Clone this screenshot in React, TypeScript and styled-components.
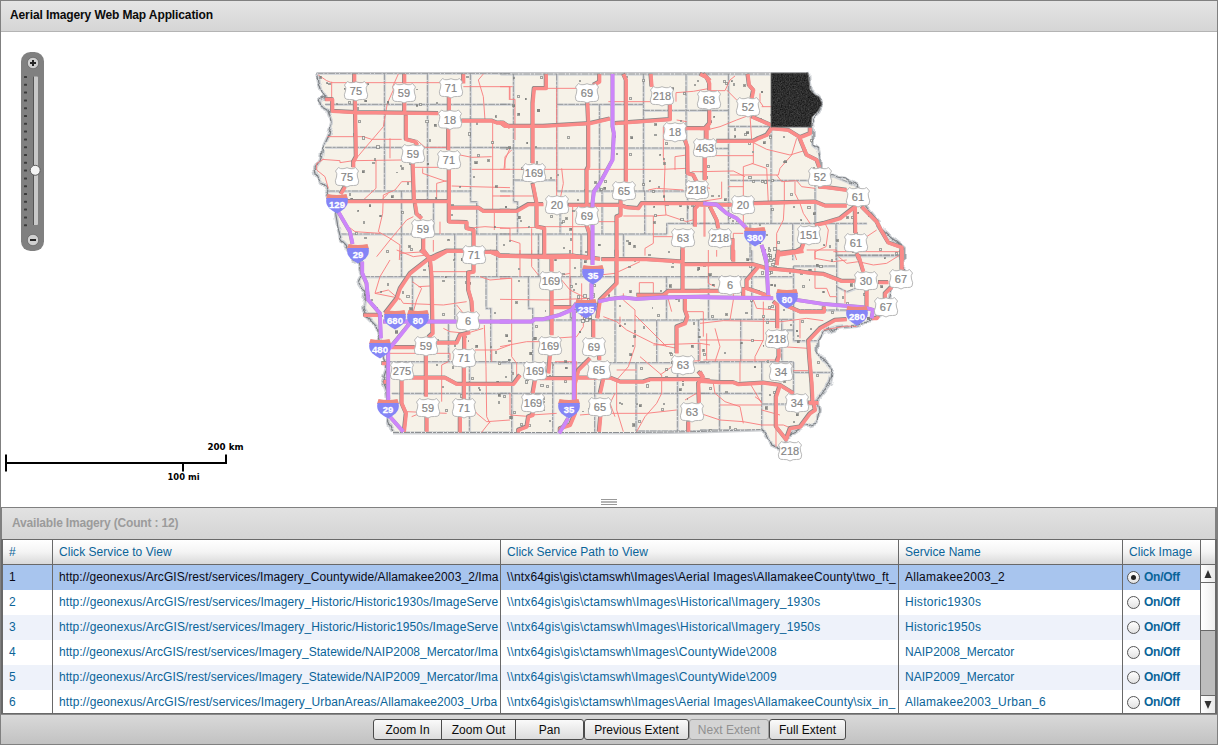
import React, { useState } from "react";
import styled, { createGlobalStyle } from "styled-components";

const GlobalStyle = createGlobalStyle`
  * { box-sizing: border-box; }
  body { margin: 0; background: #fff; font-family: "Liberation Sans", Arial, sans-serif; font-size: 12px; }
`;

const Shell = styled.div`
  width: 1218px;
  height: 745px;
  display: flex;
  flex-direction: column;
  border: 1px solid #808080;
  background: #fff;
  overflow: hidden;
`;

const TitleBar = styled.header`
  height: 31px;
  flex: none;
  padding: 0 9px;
  line-height: 29px;
  font-weight: bold;
  font-size: 12px;
  letter-spacing: -0.11px;
  color: #0b0b0b;
  background: linear-gradient(#e4e4e4, #d5d5d5);
  border-bottom: 1px solid #b4b4b4;
`;

const MapPane = styled.main`
  position: relative;
  height: 466px;
  flex: none;
`;

const MapSvg = styled.svg`
  display: block;
  width: 1216px;
  height: 466px;
`;

const SliderBox = styled.div`
  position: absolute;
  left: 20px;
  top: 20px;
`;

const ScaleBox = styled.div`
  position: absolute;
  left: 4px;
  top: 407px;
`;

const Divider = styled.div`
  height: 9px;
  flex: none;
  display: flex;
  justify-content: center;
  padding-top: 1px;
`;

const Grip = styled.div`
  width: 16px;
  height: 6px;
  border-top: 1px solid #999;
  border-bottom: 1px solid #999;
  display: flex;
  align-items: center;
  &::after { content: ""; width: 100%; height: 2px; background: #b5b5b5; }
`;

const Panel = styled.section`
  flex: 1;
  display: flex;
  flex-direction: column;
  min-height: 0;
  border-top: 1px solid #808080;
  background: #cfcfcf;
`;

const PanelTitle = styled.div`
  height: 31px;
  flex: none;
  padding-left: 10px;
  line-height: 30px;
  font-weight: bold;
  letter-spacing: -0.18px;
  color: #9b9b9b;
  background: linear-gradient(#e2e2e2, #d4d4d4);
  border-left: 1px solid #808080;
  border-right: 2px solid #808080;
`;

const Grid = styled.div`
  height: 175px;
  flex: none;
  display: flex;
  flex-direction: column;
  border: 1px solid #696969;
  border-left-width: 2px;
  border-right-width: 2px;
  background: #fff;
`;

const columns = "50px 448px 398px 224px 78px";

const HeadRow = styled.div`
  display: grid;
  grid-template-columns: ${columns} 1fr;
  height: 25px;
  flex: none;
  border-bottom: 1px solid #696969;
  background: linear-gradient(#ffffff, #f4f4f4 50%, #d9d9d9);
`;

const HeadCell = styled.div`
  border-right: 1px solid #696969;
  padding-left: 6px;
  line-height: 24px;
  letter-spacing: 0.04px;
  color: #0a6499;
  white-space: nowrap;
  &:last-child { border-right: 0; }
`;

const Body = styled.div`
  flex: 1;
  min-height: 0;
  display: flex;
`;

const Rows = styled.div`
  width: 1198px;
  overflow: hidden;
`;

const Row = styled.div<{ $active: boolean; $odd: boolean }>`
  display: grid;
  grid-template-columns: ${columns};
  height: 25px;
  background: ${(p) => (p.$active ? "#a8c5ee" : p.$odd ? "#eef2fa" : "#ffffff")};
  color: ${(p) => (p.$active ? "#0a0a14" : "#0a6499")};
  cursor: pointer;
`;

const Cell = styled.div`
  border-right: 1px solid #696969;
  padding: 0 1px 0 6px;
  line-height: 24px;
  min-width: 0;
`;

const CellText = styled.div<{ $track: number }>`
  white-space: nowrap;
  letter-spacing: ${(p) => p.$track}px;
`;

const ToggleCell = styled(Cell)`
  display: flex;
  align-items: center;
  gap: 4px;
  padding: 0 0 1px 4px;
  font-weight: bold;
  color: #0a6499;
  letter-spacing: -0.25px;
`;

const Radio = styled.span<{ $on: boolean }>`
  width: 13px;
  height: 13px;
  border-radius: 50%;
  border: 1px solid #555;
  display: flex;
  align-items: center;
  justify-content: center;
  background: linear-gradient(#ffffff, #e2e2e2);
  &::after {
    content: "";
    width: 5px;
    height: 5px;
    border-radius: 50%;
    background: ${(p) => (p.$on ? "#222" : "transparent")};
  }
`;

const ScrollBar = styled.div`
  flex: 1;
  display: flex;
  flex-direction: column;
  background: #bdbdbd;
`;

const ScrollButton = styled.button`
  height: 17px;
  flex: none;
  border: 0;
  padding: 0;
  display: grid;
  place-items: center;
  background: linear-gradient(90deg, #ffffff, #e8e8e8);
`;

const Thumb = styled.div`
  height: 49px;
  border: solid #696969;
  border-width: 1px 0;
  background: linear-gradient(90deg, #ffffff, #eeeeee);
`;

const ScrollGap = styled.div`
  flex: 1;
  border-bottom: 1px solid #696969;
`;

const Footer = styled.footer`
  flex: 1;
  display: flex;
  justify-content: center;
  align-items: flex-start;
  padding-top: 4px;
  border-top: 1px solid #8a8a8a;
  background: linear-gradient(#d9d9d9, #c2c2c2);
`;

const ToolButton = styled.button<{ $w: number; $joined?: boolean; $round: string }>`
  width: ${(p) => p.$w}px;
  height: 21px;
  padding: 0 0 0 1px;
  margin-left: ${(p) => (p.$joined ? "-1px" : "0")};
  border: 1px solid #4b4b4b;
  border-radius: ${(p) => p.$round};
  background: linear-gradient(#fafafa, #dcdcdc);
  font: 12px "Liberation Sans", Arial, sans-serif;
  letter-spacing: 0.03px;
  color: #0b0b0b;
  &:disabled { color: #909090; border-color: #9e9e9e; background: #d4d4d4; }
`;

interface Sheet {
  x: number;
  y: number;
  counties: string;
  minor: string;
  major: string;
  interstate: string;
}

/* Each sheet is digitised at three units per map pixel from its own origin. */
const sheets: Sheet[] = [
  {
    x: 300, y: 60,
    counties: "M50 40H630M75 133H630M75 262H630M85 393H515M120 522H630M253 40V393M382 40V420M511 40V425H530V522M304 393V600M400 425V522M464 522V600M590 522V600",
    minor: "M55 45L80 62 95 68H490M95 65V118M278 80L280 90 262 130 250 200 220 235 190 270 165 300M278 80L295 42M82 230H190L215 238H305M270 235V295M65 298L120 302V308L160 302 305 300M228 300V385L190 420M68 300L50 310V330L75 350 85 385M490 80H630M550 42L535 60 550 110 555 180M578 185V450M350 240L375 262 440 262M345 322H445M368 325V340L440 365M515 328H630M410 420V370L440 362M455 378L515 380 630 383M578 408H630M335 365H305L285 390 250 405 248 460 235 515 270 535 300 555 298 600M145 500L165 515 240 520M480 285L515 292 575 290M340 470L320 480 270 540 230 590M420 485V522M500 505L555 500 630 505M583 455V510M630 265L615 300 612 328M300 580L380 575M400 540V575M628 80V120M265 400L245 420",
    major: "M75 118H97V153L165 157 415 160M163 42V68M165 120L168 290 160 305V322M135 380L122 402M313 42V70M313 125V155M318 165V238L345 245 352 255M338 305L342 420M490 42V70M447 105V155M445 205V270M447 325V485L500 487V505L521 510V560M485 182H575L590 188H610L630 202M140 424H450M450 443H535L550 453H630M345 430L350 462 365 475M370 530V570L385 590 400 597 440 573H490M552 576H590L600 588H630",
    interstate: "M115 455L150 515 158 552",
  },
  {
    x: 500, y: 60,
    counties: "M0 42H630M170 133H430M430 151H630M0 133H40M0 264H560M40 360H170M170 393H560M0 393H40M0 522H500M500 522V490H630M40 42V425H52V522M170 42V393M180 450V522M298 133V393H306V522M430 42V393H434V522M558 42V393H562V490M115 522V600M243 522V600M370 522V600",
    minor: "M0 80H38M30 80V118H45V240M138 85H250M325 125H480M528 125V98L580 94 630 85M170 85V430M0 328H490L560 325M490 200V290L495 320 492 400 498 465M15 325V290L35 270M445 390L470 385 550 390M525 330V290L560 285M575 335H610M185 325L190 370 178 430M0 408H100M130 500H260M218 440V587M370 468H460L500 465 560 485 585 478M460 468V550L435 565V587M270 485H350M95 505V587M30 505V540L60 550V587M460 530H540M612 440V530M610 380L630 385M0 505L110 502M530 180L560 185",
    major: "M138 42V85H102L98 130V310M98 370L110 430V500L133 505V590M298 42V65L280 75M262 125L265 190V320L260 330V435M0 187L15 198H130L270 190 330 176M345 190L510 178V130M370 42L378 60V365M452 42L455 80M610 42L630 62M555 205H630M555 240L562 260 563 340 580 345 590 365M618 205V240M615 290V360M0 453H50L85 433H130M205 435H360L380 442 415 445 425 430H620M362 420V465L350 470V590M260 495L268 520V590M0 587L150 592 250 590 300 597M600 430L585 445V500M548 560V600",
    interstate: "M338 42V200L342 220 338 300 300 370 282 395 278 430V600",
  },
  {
    x: 700, y: 60,
    counties: "M0 42H210M0 151H85M85 199H335M0 265H85M90 361H345V348H400L465 375M0 490H500M410 587H600M85 42V490M213 199V490M345 361V490M278 490V600M408 490V600M150 490V600",
    minor: "M28 92H75L90 60 105 48M80 90L110 120M20 210L60 200 110 180 150 165 155 240M185 140H213M180 100V125L190 140M160 245V310L130 320V430M160 248L200 268 270 285 320 270M290 235L275 285 240 325 235 345H90M155 310L200 325 205 430M0 335L100 333 135 350M35 287H160M230 345L245 365 290 362 305 380 345 385M253 365V430L250 480 230 520V580M285 365V400L300 430 310 460 330 490M65 365V415L0 425M375 490L385 510 378 560 345 575V600M530 510L500 530M320 570H410M400 575H600M130 435V500M15 440V530M85 380H130M100 535V520H130",
    major: "M0 42L20 52 28 70V92M28 150V190L15 205M0 205H20V240M15 290V360M50 243H160L175 235 200 225 215 203M143 42L147 75 160 90 155 115M155 170L213 195M215 205L265 210 300 232 330 220V203M298 232L320 285 350 300 358 322M160 430L270 427 345 425 375 437H440M0 434H95M355 380L380 382 440 390M345 495L370 490 420 475 465 440 466 520M470 580L478 600M485 440L530 485 540 505 565 548 605 562V600M30 440L50 480 55 505M98 535V600M230 600L235 580 290 573 305 565 312 545",
    interstate: "M10 430L50 434 80 460 110 475 140 505M185 555L200 600",
  },
  {
    x: 300, y: 250,
    counties: "M190 80H630M255 335H630M275 430H630M275 547H630M304 0V80M337 80V190M464 0V210M445 222V335M508 335V547M590 0V80M558 80V175H572V335",
    minor: "M270 30L240 80 225 130 300 145 310 160 430 165 500 155M395 65H520M337 95L365 115 350 150 340 185M355 110L390 108M540 80L570 90 630 85M430 235L450 245 500 250 550 235M553 225L558 350 560 500 570 520M525 300H590L630 285M270 310H450V330M425 455V345L445 335M320 485L440 490M520 475L530 490 560 515 630 510M570 515L545 547M290 0L340 20 380 15M470 165L490 190M575 335V300M225 130L265 120 300 150M335 500L360 490",
    major: "M362 0L390 25 395 80 398 250 385 262M385 27L410 15 440 3H490M385 27L330 70 300 115 290 145 255 190M570 5L600 18H630M521 35V65L505 68V120L515 155 517 185M190 195H240M275 292H345M410 278H470L480 255 510 247M493 250V300M492 345V450M335 383H435L470 402H630M378 315V440M380 495V545M305 390V460L318 490 312 545M480 500V547M245 340H262M250 395H262",
    interstate: "M187 35V70L200 100 205 150 240 190 243 265M250 215H470M535 215H630M330 220L290 270 265 300V450L270 500 310 545",
  },
  {
    x: 500, y: 250,
    counties: "M0 80H630M98 210H600M0 338H630M0 430H630M0 548H410V543H630M85 80V175H98V338M211 80V210M345 80V338M35 338V548M158 338V548M284 338V548M408 338V543M532 338V545M470 210V338M499 80V210M595 210V338M115 0V80M243 0V80",
    minor: "M60 0V80M0 85H35V320L50 340V380M0 148L150 150 270 145M95 0V50L115 75M160 80L210 70M210 0V190M300 75L345 70 420 35M418 98H460V135H418ZM370 130V150L405 180V290L385 350 350 390V480L370 545M310 200L350 215 380 240 460 280 530 295M405 195L450 240 500 290M460 285L600 280 630 285M480 375L530 340M420 320L485 375V430L470 460 435 500 410 545M0 290L80 275H120M158 265L230 260 250 230V200M95 495L170 490M240 495L300 490 440 490 530 480M590 430L555 450M560 185H610V260M600 280V332L550 335M500 130L515 185M185 90L210 120 250 140M245 100V200M165 335H230V380M30 430V495L95 500M345 500L330 460 345 430M350 360H410M600 430V455M360 200V220",
    major: "M0 18H120L220 17 265 25M305 28H440L550 35M550 43H630M155 18V65M155 120V255M150 315L145 370M120 385H220M160 172H215M350 0V100L320 130 300 150 292 205M280 210V262M548 0V120M410 135H490L505 123H630M555 145V180L562 200 555 220 530 230V310M0 402H40L60 375M105 390L98 430M98 485V495L85 500 80 530 55 540V547M270 325L235 360 225 400V490L210 525 180 535V547M230 383H330L360 395H430L450 388H600L630 392M298 310V330M310 385L300 430M302 490L297 545M595 365L608 380 595 400 597 460M565 515V545",
    interstate: "M0 215H95L105 208H130L180 195 215 180 230 160M222 180V450M278 0V45M275 100V150M295 155L330 147 370 143 410 147 480 143 630 140M205 505L178 550",
  },
  {
    x: 700, y: 250,
    counties: "M0 80H280M0 208H280M280 48H410M410 15H600M280 240H245V208M280 240V272H365M280 180H460M0 335H280M280 367H395M0 430H185M185 462H350M0 540H185M25 80V208M155 0V208M280 48V240M122 208V335M245 240V335M410 0V180M58 335V540M185 335V540M280 335V462M410 110L440 125 465 115",
    minor: "M25 0V100L45 110M50 0V20M345 0V25L400 35 440 30M280 0L290 30M345 55V115L380 115 390 140H410M415 20L440 40 475 35 520 45 560 40 600 15M100 120V150L90 210M0 220L70 212 245 215 320 205 370 212M0 270H120L190 272M190 155V270L165 320V335M45 235L60 290 45 335M20 250V330M10 330H240M245 290L325 295M280 362H325M40 400L45 430 75 455 120 470 130 520M120 335V395M60 465H185M0 490L60 510 130 515 185 525 250 525 275 535M150 400L185 460M300 265V210M370 240L440 228 470 230M228 530V590M185 480L240 495M165 440L185 455M435 120V160M160 150L170 175 230 180",
    major: "M0 43H160L200 55 280 62 340 70 370 72 425 93H465M100 0V35M175 50L140 90V115L170 125 210 140M0 123H60M130 112V138M235 0L230 45M230 15L310 3M475 15L490 65M605 0V60M535 97H565M575 110L555 130V145M220 155L232 165V235M236 295V320L230 335M255 165L300 185H372V170M500 120V170M440 208L405 210 360 235 325 272 328 320 335 400 338 460M0 393L60 397H100L115 403 190 398 240 405 280 430M240 405L228 440V530L258 568 270 535 300 530 330 490 345 480 340 455M325 458H355M0 365L8 380 0 395M515 205H530L535 198",
    interstate: "M190 0L200 40 205 135M0 142L220 145M290 150L370 162 490 172 520 180 515 205",
  },
];

const eastBank =
  "810 90 815 95 819 97 822 104 818 111 812 123 813 130 813 145 818 149 820 158 820 173 833 176 846 179 855 184 860 199 868 209 877 220 881 229 890 237 898 243 904 248 904 257 903 273 890 290 887 307 877 317 857 326 837 328 823 332 817 342 817 352 825 362 833 370 830 383 817 400 819 410 817 423 806 426 790 433 787 442 781 448 775 447 770 442 763 433 762 429";
const westBank =
  "393 432 388 420 389 410 387 393 383 380 387 367 383 357 380 340 377 327 367 317 363 307 365 293 358 282 362 275 358 263 353 260 348 247 341 240 338 227 335 210 327 192 323 185 317 177 315 168 320 160 323 148 328 137 332 122 328 110 321 106 319 100 325 97 322 92 319 82 317 73";
const land = `M317 73H808L${eastBank} 700 431 637 432 ${westBank}Z`;
const banks = `M808 73L${eastBank}M${westBank}`;

const allamakee = "M771 73H808L810 90 815 95 819 97 822 104 818 111 812 117 811 127H771Z";

const usRoutes: [string, number, number][] = [
  ["75", 356, 91], ["59", 404, 93], ["71", 451, 88], ["18", 450, 119.5], ["59", 413, 154], ["71", 449, 160],
  ["75", 347, 177], ["59", 423, 229], ["71", 474, 255], ["69", 587, 93], ["218", 662, 96], ["63", 709, 100],
  ["52", 748, 107], ["18", 675, 132], ["463", 705, 148], ["169", 534, 173], ["218", 697, 190], ["65", 624, 191],
  ["20", 557, 205], ["69", 587, 216], ["20", 743, 205], ["63", 683, 238], ["218", 720, 238], ["151", 809, 235],
  ["52", 820, 177], ["61", 858, 197], ["61", 856, 243], ["169", 551, 281], ["6", 730, 285], ["30", 866, 281],
  ["67", 901, 279], ["67", 886, 307], ["6", 468, 321], ["59", 426, 346], ["71", 464, 358], ["275", 402, 371],
  ["169", 550, 346], ["69", 594, 347], ["169", 535, 371], ["65", 599, 370], ["218", 777, 339], ["34", 781, 372],
  ["34", 797, 403], ["63", 683, 365], ["59", 428, 408], ["71", 464, 408], ["169", 533, 403], ["65", 600, 407],
  ["63", 692, 412], ["218", 790, 451],
];

const interstates: [string, number, number][] = [
  ["129", 337, 203], ["29", 358, 253], ["35", 593, 274], ["235", 586, 308], ["380", 755, 236], ["80", 787, 298],
  ["280", 857, 315], ["680", 395, 319], ["80", 418, 319], ["480", 380, 348], ["29", 388, 408], ["35", 569, 408],
];

function makeTowns(count: number) {
  let seed = 71;
  const next = () => (seed = (seed * 16807) % 2147483647) / 2147483647;
  const towns: { x: number; y: number; s: number; open: boolean }[] = [];
  for (let i = 0; i < count; i++) {
    towns.push({ x: 318 + next() * 582, y: 76 + next() * 354, s: 0.8 + next() * 1.6, open: next() > 0.35 });
  }
  for (let i = 0; i < 22; i++) {
    towns.push({ x: 571 + next() * 26, y: 282 + next() * 38, s: 1 + next() * 2.2, open: true });
    towns.push({ x: 757 + next() * 20, y: 247 + next() * 26, s: 1 + next() * 1.8, open: true });
  }
  return towns;
}
const towns = makeTowns(560);

const Layer = ({ field, ...rest }: { field: keyof Sheet } & React.SVGProps<SVGPathElement>) => (
  <>
    {sheets.map((s) => (
      <path key={`${s.x}-${s.y}`} transform={`translate(${s.x} ${s.y}) scale(.33333)`} d={String(s[field])} fill="none" {...rest} />
    ))}
  </>
);

const UsShield = ({ label, x, y }: { label: string; x: number; y: number }) => (
  <g transform={`translate(${x} ${y})`}>
    <path
      d="M-8.5 -9.5Q-6.5 -7.8 -4 -8.3Q-2 -8.5 0 -9.3Q2 -8.5 4 -8.3Q6.5 -7.8 8.5 -9.5L11.5 -6Q9.3 -3.5 10.5 0Q12.6 4 11 7.2Q9.5 8.8 6.5 8.5Q3 8 0 10Q-3 8 -6.5 8.5Q-9.5 8.8 -11 7.2Q-12.6 4 -10.5 0Q-9.3 -3.5 -11.5 -6Z"
      fill="#fff" stroke="#b0b0b0" strokeWidth=".9"
    />
    <text y="4" textAnchor="middle" fontSize="11" fill="#858585" stroke="#858585" strokeWidth=".2" letterSpacing=".1">{label}</text>
  </g>
);

const InterstateShield = ({ label, x, y }: { label: string; x: number; y: number }) => (
  <g transform={`translate(${x} ${y})`}>
    <path d="M-9.5 -9Q0 -7.2 9.5 -9L11 -4H-11Z" fill="#ee8880" />
    <path d="M-10.5 -5H10.5Q12 1 7.5 5.5Q4 8.5 0 10.5Q-4 8.5 -7.5 5.5Q-12 1 -10.5 -5Z" fill="#8585f6" />
    <text y="4.6" textAnchor="middle" fontSize="9.5" fontWeight="bold" fill="#fff" stroke="#fff" strokeWidth=".3">{label}</text>
  </g>
);

const IowaMap = () => (
  <MapSvg viewBox="1 32 1216 466">
    <defs>
      <clipPath id="land"><path d={land} /></clipPath>
      <filter id="grain" x="0" y="0" width="100%" height="100%" colorInterpolationFilters="sRGB">
        <feTurbulence type="fractalNoise" baseFrequency=".75" numOctaves="2" seed="4" />
        <feColorMatrix type="matrix" values=".3 0 0 0 .03  .3 0 0 0 .03  .3 0 0 0 .03  0 0 0 0 1" />
        <feComposite in2="SourceGraphic" operator="in" />
      </filter>
      <filter id="meander" x="-2%" y="-2%" width="104%" height="104%" colorInterpolationFilters="sRGB">
        <feTurbulence type="fractalNoise" baseFrequency=".13" numOctaves="1" seed="9" result="n" />
        <feDisplacementMap in="SourceGraphic" in2="n" scale="7" xChannelSelector="R" yChannelSelector="G" />
      </filter>
    </defs>
    <path d={land} fill="#f6f2e8" />
    <path d="M316.5 72.5H808" stroke="#c4c5c8" strokeWidth="1" />
    <g clipPath="url(#land)">
      <g transform="translate(.5 .5)"><Layer field="counties" stroke="#d5d7da" strokeWidth="7.5" /></g>
      <Layer field="counties" stroke="#8c8f92" strokeWidth="2.6" strokeDasharray="20 3 9 3" />
    </g>
    <path d="M393 433.5L637 433.5 700 432.5 762 430.5" fill="none" stroke="#d0d2d5" strokeWidth="2" />
    <path d="M393 432.5L637 432.5 700 431.5 762 429.5" fill="none" stroke="#8c8f92" strokeWidth="1" strokeDasharray="6 1 3 1" />
    <g filter="url(#meander)">
      <path d={banks} fill="none" stroke="#d0d3d7" strokeWidth="4" strokeLinejoin="round" />
      <path d={banks} fill="none" stroke="#7d8185" strokeWidth="1.2" strokeLinejoin="round" />
    </g>
    <Layer field="minor" stroke="#f97f7f" strokeWidth="2.8" strokeLinejoin="round" />
    <g clipPath="url(#land)" shapeRendering="crispEdges">
      {towns.map((t, i) => (
        <rect key={i} x={t.x} y={t.y} width={t.s} height={t.s} fill={t.open ? "#eeeeea" : "#8a8a86"} stroke="#80827f" strokeWidth=".7" />
      ))}
    </g>
    <g transform="translate(-.35 -.35)">
      <Layer field="major" stroke="#858585" strokeWidth="11.5" strokeLinejoin="round" />
    </g>
    <g transform="translate(.2 .2)">
      <Layer field="major" stroke="#fb8b89" strokeWidth="10.8" strokeLinejoin="round" />
    </g>
    <g transform="translate(-.3 -.2)">
      <Layer field="interstate" stroke="#a08cb0" strokeWidth="11.5" strokeLinejoin="round" />
    </g>
    <Layer field="interstate" stroke="#cd86fa" strokeWidth="11" strokeLinejoin="round" />
    <path d={allamakee} fill="#333" filter="url(#grain)" />
    <path d={allamakee} fill="none" stroke="#6e6e6e" strokeWidth=".8" />
    {usRoutes.map(([label, x, y], i) => <UsShield key={i} label={label} x={x} y={y} />)}
    {interstates.map(([label, x, y], i) => <InterstateShield key={i} label={label} x={x} y={y} />)}
  </MapSvg>
);

const ZoomSlider = () => (
  <SliderBox>
    <svg width="24" height="200" viewBox="21 52 24 200" display="block">
      <rect x="21" y="52" width="23" height="199" rx="9.5" fill="#808080" />
      {Array.from({ length: 20 }, (_, i) => (
        <rect key={i} x="24" y={76 + i * 7.8} width="3" height="2" rx=".5" fill="#3a3a3a" />
      ))}
      <rect x="33" y="76.5" width="5" height="148.5" rx="1" fill="#c9c9c9" />
      <path d="M33.5 76.5V225" stroke="#555" />
      <circle cx="35.2" cy="170.3" r="5" fill="#f4f4f4" stroke="#5e5e5e" />
      <circle cx="33" cy="63" r="5.7" fill="#d0d0d0" stroke="#5f5f5f" strokeWidth=".7" />
      <path d="M30 63H36M33 60V66" stroke="#252525" strokeWidth="2" />
      <circle cx="33" cy="240" r="5.7" fill="#d0d0d0" stroke="#5f5f5f" strokeWidth=".7" />
      <path d="M30 240H36" stroke="#252525" strokeWidth="2" />
    </svg>
  </SliderBox>
);

const ScaleBar = () => (
  <ScaleBox>
    <svg width="245" height="46" viewBox="5 439 245 46" display="block" fontFamily="'DejaVu Sans', Verdana, sans-serif" fontSize="9.5" fontWeight="bold">
      <path d="M6 454.5V471.5M5 463H227M226 454.5V464M183 462V471.5" stroke="#000" strokeWidth="2" fill="none" />
      <text x="207.5" y="450" textLength="36" lengthAdjust="spacingAndGlyphs">200 km</text>
      <text x="167.5" y="480" textLength="32" lengthAdjust="spacingAndGlyphs">100 mi</text>
    </svg>
  </ScaleBox>
);

const base = "http://geonexus/ArcGIS/rest/services/";
const share = "\\\\ntx64gis\\gis\\ctamswh\\Images\\";

interface Service {
  url: string;
  path: string;
  name: string;
  track: [number, number, number];
}

const services: Service[] = [
  { url: base + "Imagery_Countywide/Allamakee2003_2/Ima", path: share + "Aerial Images\\AllamakeeCounty\\two_ft_", name: "Allamakee2003_2", track: [0.08, 0.14, 0.25] },
  { url: base + "Imagery_Historic/Historic1930s/ImageServe", path: share + "Historical\\Imagery_1930s", name: "Historic1930s", track: [0.09, 0.21, 0.27] },
  { url: base + "Imagery_Historic/Historic1950s/ImageServe", path: share + "Historical\\Imagery_1950s", name: "Historic1950s", track: [0.09, 0.21, 0.27] },
  { url: base + "Imagery_Statewide/NAIP2008_Mercator/Ima", path: share + "CountyWide\\2008", name: "NAIP2008_Mercator", track: [0.035, 0.17, 0.03] },
  { url: base + "Imagery_Statewide/NAIP2009_Mercator/Ima", path: share + "CountyWide\\2009", name: "NAIP2009_Mercator", track: [0.035, 0.17, 0.03] },
  { url: base + "Imagery_UrbanAreas/Allamakee2003_Urba", path: share + "Aerial Images\\AllamakeeCounty\\six_in_", name: "Allamakee2003_Urban_6", track: [0.1, 0.15, 0.26] },
];

export default function App() {
  const [active, setActive] = useState(0);
  return (
    <>
      <GlobalStyle />
      <Shell>
        <TitleBar>Aerial Imagery Web Map Application</TitleBar>
        <MapPane>
          <IowaMap />
          <ZoomSlider />
          <ScaleBar />
        </MapPane>
        <Divider><Grip /></Divider>
        <Panel>
          <PanelTitle>Available Imagery (Count : 12)</PanelTitle>
          <Grid>
            <HeadRow>
              <HeadCell>#</HeadCell>
              <HeadCell>Click Service to View</HeadCell>
              <HeadCell>Click Service Path to View</HeadCell>
              <HeadCell>Service Name</HeadCell>
              <HeadCell>Click Image</HeadCell>
              <HeadCell />
            </HeadRow>
            <Body>
              <Rows>
                {services.map((s, i) => (
                  <Row key={s.name} $active={i === active} $odd={i % 2 === 0} onClick={() => setActive(i)}>
                    <Cell>{i + 1}</Cell>
                    <Cell><CellText $track={s.track[0]}>{s.url}</CellText></Cell>
                    <Cell><CellText $track={s.track[1]}>{s.path}</CellText></Cell>
                    <Cell><CellText $track={s.track[2]}>{s.name}</CellText></Cell>
                    <ToggleCell><Radio $on={i === active} />On/Off</ToggleCell>
                  </Row>
                ))}
              </Rows>
              <ScrollBar>
                <ScrollButton aria-label="Scroll up"><svg width="8" height="8"><path d="M4 0L7.5 8H.5Z" fill="#333" /></svg></ScrollButton>
                <Thumb />
                <ScrollGap />
                <ScrollButton aria-label="Scroll down"><svg width="8" height="8"><path d="M4 8L7.5 0H.5Z" fill="#333" /></svg></ScrollButton>
              </ScrollBar>
            </Body>
          </Grid>
          <Footer>
            <ToolButton $w={69} $round="3px 0 0 3px">Zoom In</ToolButton>
            <ToolButton $w={75} $joined $round="0">Zoom Out</ToolButton>
            <ToolButton $w={69} $joined $round="0 3px 3px 0">Pan</ToolButton>
            <ToolButton $w={105} $round="3px">Previous Extent</ToolButton>
            <ToolButton $w={80} $round="3px" disabled>Next Extent</ToolButton>
            <ToolButton $w={77} $round="3px">Full Extent</ToolButton>
          </Footer>
        </Panel>
      </Shell>
    </>
  );
}
